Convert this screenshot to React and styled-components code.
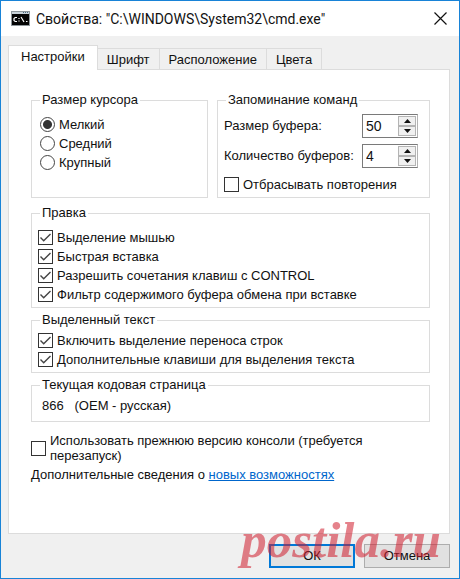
import React, { useState } from "react";
import styled, { createGlobalStyle } from "styled-components";

const GlobalStyle = createGlobalStyle`
    * {
        box-sizing: border-box;
    }

    body {
        margin: 0;
        background-color: #f0f0f0;
        color: #111;
        font-family: "Liberation Sans", Arial, sans-serif;
        font-size: 13px;
        line-height: 16px;
    }

    button, input {
        font: inherit;
        color: inherit;
    }
`;

const Window = styled.div`
    position: relative;
    display: flex;
    flex-direction: column;
    min-height: 100vh;
    border: 1px solid #1883d7;
    background-color: #f0f0f0;
`;

const TitleBar = styled.header`
    display: flex;
    align-items: center;
    gap: 6px;
    height: 35px;
    padding: 0 12px 0 10px;
    background-color: #fff;
`;

const Title = styled.h1`
    flex: 1;
    margin: 0;
    font-family: Roboto, "Noto Sans", sans-serif;
    font-size: 14px;
    font-weight: 400;
    line-height: 20px;
    white-space: nowrap;
`;

const CloseButton = styled.button`
    display: flex;
    padding: 0;
    border: none;
    background: none;
`;

const Content = styled.main`
    flex: 1;
    display: flex;
    flex-direction: column;
    padding: 9px 9px 10px 7px;
`;

const TabList = styled.div`
    display: flex;
    align-items: flex-end;
`;

const Tab = styled.button`
    height: ${(props) => (props.$active ? "25px" : "21px")};
    margin-bottom: ${(props) => (props.$active ? "-1px" : "0")};
    padding: ${(props) => (props.$active ? "0 12px 2px" : "1px 9px 0")};
    border: 1px solid #dcdcdc;
    border-bottom: none;
    border-left-width: ${(props) => (props.$active ? "1px" : "0")};
    background-color: ${(props) => (props.$active ? "#fff" : "#f0f0f0")};
    z-index: ${(props) => (props.$active ? 1 : 0)};
`;

const Panel = styled.section`
    flex: 1;
    display: flex;
    flex-direction: column;
    gap: 4px;
    padding: 22px 19px 22px 22px;
    border: 1px solid #dcdcdc;
    background-color: #fff;
`;

const Columns = styled.div`
    display: grid;
    grid-template-columns: 177fr 213fr;
    gap: 9px;
    margin-bottom: 3px;
`;

const Group = styled.fieldset`
    min-width: 0;
    margin: 0;
    padding: ${(props) => props.$padding || "7px 6px 3px"};
    border: 1px solid #dcdcdc;
`;

const Legend = styled.legend`
    margin-left: ${(props) => props.$indent || "2px"};
    padding: 0 2px;
`;

const Option = styled.label`
    display: flex;
    align-items: center;
    gap: 4px;
    min-height: 19px;
`;

const Check = styled.input`
    appearance: none;
    flex: none;
    width: 15px;
    height: 15px;
    margin: 0;
    border: 1px solid #333;
    background: #fff center / 13px 13px no-repeat;

    &:checked {
        background-image: url("data:image/svg+xml,%3Csvg xmlns='http://www.w3.org/2000/svg' viewBox='0 0 13 13'%3E%3Cpath d='M1.5 6.5 4.7 9.7 11.5 3' fill='none' stroke='%23444' stroke-width='1.4'/%3E%3C/svg%3E");
    }
`;

const Radio = styled.input`
    appearance: none;
    flex: none;
    width: 15px;
    height: 15px;
    margin: 0;
    border: 1px solid #444;
    border-radius: 50%;
    background-color: #fff;

    &:checked {
        background-image: radial-gradient(circle, #333 4px, transparent 5px);
    }
`;

const Fields = styled.div`
    display: flex;
    flex-direction: column;
    gap: 6px;
    margin-bottom: 7px;
`;

const Field = styled.div`
    display: flex;
    align-items: center;
    justify-content: space-between;
    padding-right: 5px;
`;

const SpinBox = styled.div`
    display: flex;
    width: 56px;
    height: 24px;
    padding: 1px;
    border: 1px solid #7a7a7a;
    border-right-color: #b4b4b4;
    background-color: #fff;
`;

const SpinInput = styled.input`
    appearance: textfield;
    flex: 1;
    min-width: 0;
    padding: 0 2px;
    border: none;
    outline: none;
    font-size: 14px;

    &::-webkit-inner-spin-button {
        display: none;
    }
`;

const Arrows = styled.div`
    display: flex;
    flex-direction: column;
    width: 18px;
`;

const ArrowButton = styled.button`
    flex: 1;
    display: flex;
    align-items: center;
    justify-content: center;
    padding: 0;
    border: 1px solid #b4b4b4;
    background-color: #f0f0f0;
`;

const CodePage = styled.p`
    margin: 0;
    white-space: pre;
`;

const Legacy = styled.label`
    display: flex;
    align-items: center;
    gap: 4px;
    margin-top: 7px;
    line-height: 15px;
`;

const More = styled.p`
    margin: 0;
    line-height: 15px;

    a {
        color: #0066cc;
    }
`;

const Footer = styled.footer`
    display: flex;
    justify-content: flex-end;
    gap: 9px;
    padding-top: 10px;
`;

const DialogButton = styled.button`
    width: 86px;
    height: 24px;
    padding: 0;
    border: ${(props) => (props.$primary ? "2px solid #0078d7" : "1px solid #adadad")};
    background-color: #e1e1e1;
`;

const Watermark = styled.span`
    position: absolute;
    right: 18px;
    bottom: 10px;
    color: rgba(208, 28, 44, 0.55);
    font-family: "Liberation Serif", serif;
    font-size: 51px;
    font-style: italic;
    font-weight: 700;
    line-height: 56px;
    pointer-events: none;
`;

const CmdIcon = () => (
    <svg width="19" height="15" viewBox="0 0 19 15" aria-hidden="true">
        <rect width="19" height="15" fill="#8f979c" />
        <rect x="1" y="1" width="17" height="2" fill="#c9d3da" />
        <path d="M12 1.5h1M14 1.5h1M16 1.5h1" stroke="#47687f" />
        <rect x="1" y="3" width="17" height="11" fill="#050505" />
        <path
            d="M6 6.5H4.2L3 7.5v2l1.2 1H6M8 7v1M8 9.5v1M10 6l3 5M15 10.5h1.5"
            fill="none"
            stroke="#fff"
            strokeWidth="1.2"
        />
    </svg>
);

const Spinner = ({ id, value, onChange }) => (
    <SpinBox>
        <SpinInput
            id={id}
            type="number"
            value={value}
            onChange={(e) => onChange(Number(e.target.value))}
        />
        <Arrows>
            <ArrowButton type="button" aria-label="Больше" onClick={() => onChange(value + 1)}>
                <svg width="7" height="4" viewBox="0 0 7 4">
                    <path d="M0 4 3.5 0 7 4z" fill="#111" />
                </svg>
            </ArrowButton>
            <ArrowButton type="button" aria-label="Меньше" onClick={() => onChange(value - 1)}>
                <svg width="7" height="4" viewBox="0 0 7 4">
                    <path d="M0 0 3.5 4 7 0z" fill="#111" />
                </svg>
            </ArrowButton>
        </Arrows>
    </SpinBox>
);

const tabs = ["Настройки", "Шрифт", "Расположение", "Цвета"];
const cursorSizes = ["Мелкий", "Средний", "Крупный"];
const editOptions = [
    "Выделение мышью",
    "Быстрая вставка",
    "Разрешить сочетания клавиш с CONTROL",
    "Фильтр содержимого буфера обмена при вставке",
];
const selectionOptions = [
    "Включить выделение переноса строк",
    "Дополнительные клавиши для выделения текста",
];

const App = () => {
    const [tab, setTab] = useState(tabs[0]);
    const [bufferSize, setBufferSize] = useState(50);
    const [bufferCount, setBufferCount] = useState(4);

    return (
        <>
            <GlobalStyle />
            <Window>
                <TitleBar>
                    <CmdIcon />
                    <Title>Свойства: "C:\WINDOWS\System32\cmd.exe"</Title>
                    <CloseButton type="button" aria-label="Закрыть">
                        <svg width="13" height="13" viewBox="0 0 13 13">
                            <path d="M.5.5l12 12M12.5.5l-12 12" stroke="#111" strokeWidth="1.2" />
                        </svg>
                    </CloseButton>
                </TitleBar>
                <Content>
                    <TabList role="tablist">
                        {tabs.map((name) => (
                            <Tab
                                key={name}
                                type="button"
                                role="tab"
                                aria-selected={tab === name}
                                $active={tab === name}
                                onClick={() => setTab(name)}
                            >
                                {name}
                            </Tab>
                        ))}
                    </TabList>
                    <Panel>
                        <Columns>
                            <Group $padding="7px 8px 3px">
                                <Legend $indent="0">Размер курсора</Legend>
                                {cursorSizes.map((name, i) => (
                                    <Option key={name}>
                                        <Radio type="radio" name="cursor" defaultChecked={i === 0} />
                                        {name}
                                    </Option>
                                ))}
                            </Group>
                            <Group $padding="6px 6px 3px">
                                <Legend>Запоминание команд</Legend>
                                <Fields>
                                    <Field>
                                        <label htmlFor="size">Размер буфера:</label>
                                        <Spinner id="size" value={bufferSize} onChange={setBufferSize} />
                                    </Field>
                                    <Field>
                                        <label htmlFor="count">Количество буферов:</label>
                                        <Spinner id="count" value={bufferCount} onChange={setBufferCount} />
                                    </Field>
                                </Fields>
                                <Option>
                                    <Check type="checkbox" />
                                    Отбрасывать повторения
                                </Option>
                            </Group>
                        </Columns>
                        <Group>
                            <Legend>Правка</Legend>
                            {editOptions.map((name) => (
                                <Option key={name}>
                                    <Check type="checkbox" defaultChecked />
                                    {name}
                                </Option>
                            ))}
                        </Group>
                        <Group $padding="3px 6px">
                            <Legend>Выделенный текст</Legend>
                            {selectionOptions.map((name) => (
                                <Option key={name}>
                                    <Check type="checkbox" defaultChecked />
                                    {name}
                                </Option>
                            ))}
                        </Group>
                        <Group $padding="5px 10px 7px">
                            <Legend $indent="-2px">Текущая кодовая страница</Legend>
                            <CodePage>{"866   (OEM - русская)"}</CodePage>
                        </Group>
                        <Legacy>
                            <Check type="checkbox" />
                            <span>Использовать прежнюю версию консоли (требуется перезапуск)</span>
                        </Legacy>
                        <More>
                            Дополнительные сведения о <a href="#new">новых возможностях</a>
                        </More>
                    </Panel>
                    <Footer>
                        <DialogButton type="button" $primary>ОК</DialogButton>
                        <DialogButton type="button">Отмена</DialogButton>
                    </Footer>
                </Content>
                <Watermark>postila.ru</Watermark>
            </Window>
        </>
    );
};

export default App;
